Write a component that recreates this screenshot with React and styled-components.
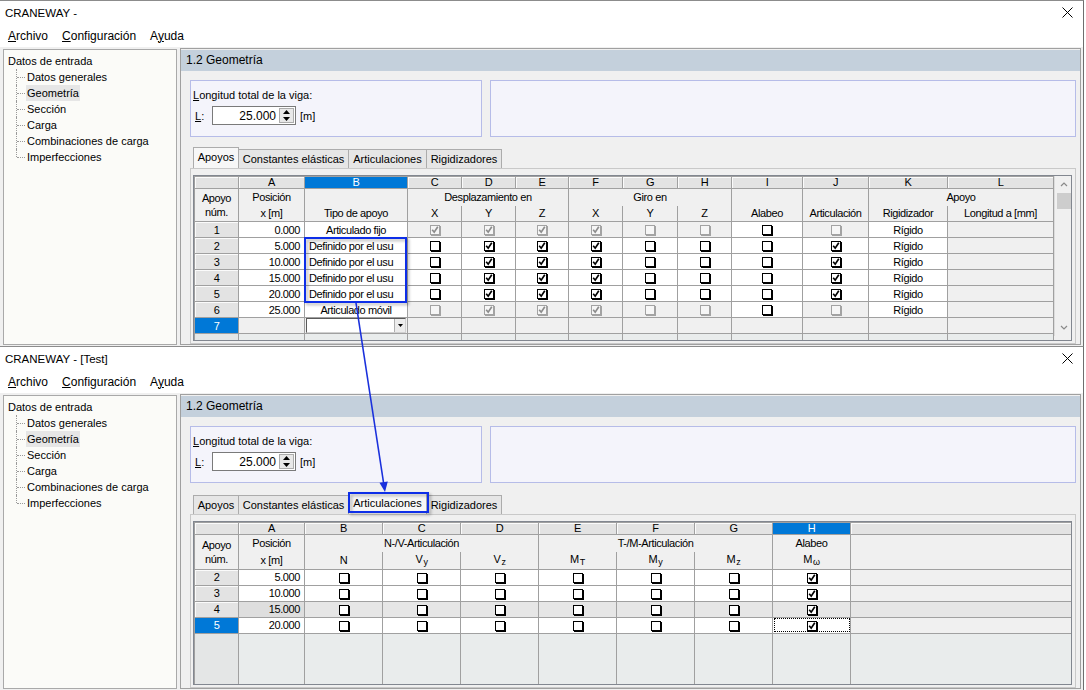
import React from "react";
import styled, { createGlobalStyle } from "styled-components";

const GlobalStyle = createGlobalStyle`
  html, body { margin: 0; padding: 0; background: #fff; }
  body { font-family: "Liberation Sans", Arial, sans-serif; color: #000; }
`;

const Page = styled.div`
  position: relative;
  width: 1086px;
  height: 690px;
  overflow: hidden;
  background: #fff;
`;

const Window = styled.section`
  width: 1084px;
  height: ${p => p.$h}px;
  box-sizing: border-box;
  border-top: 1px solid #8c8c8c;
  border-right: 1px solid #6e6e6e;
  display: flex;
  flex-direction: column;
  overflow: hidden;
  background: #f0f0f0;
`;

const TitleBar = styled.div`
  height: 23px;
  flex: none;
  background: #fff;
  display: flex;
  align-items: center;
  justify-content: space-between;
  padding: 0 10px 0 5px;
  font-size: 11.5px;
`;

const MenuBar = styled.div`
  height: 23px;
  flex: none;
  background: #fff;
  display: flex;
  align-items: center;
  gap: 14px;
  padding-left: 8px;
  font-size: 12px;
`;

const Body = styled.div`
  flex: 1;
  min-height: 0;
  display: flex;
  padding: 1px 2px 1px 3px;
`;

const Tree = styled.div`
  width: 174px;
  flex: none;
  box-sizing: border-box;
  margin-top: 1px;
  border: 1px solid #a9a9a9;
  background: #fbfbf8;
  padding: 3px 0 0 4px;
  font-size: 11px;
`;

const TreeRoot = styled.div`
  height: 16px;
  line-height: 16px;
`;

const TreeChild = styled.div`
  display: flex;
  align-items: center;
  height: 16px;
  margin-left: 8px;
`;

const Connector = styled.span`
  position: relative;
  width: 10px;
  height: 16px;
  flex: none;
  &::before {
    content: "";
    position: absolute;
    left: 0;
    top: 0;
    height: ${p => (p.$last ? "8px" : "16px")};
    border-left: 1px dotted #9a9a9a;
  }
  &::after {
    content: "";
    position: absolute;
    left: 1px;
    top: 8px;
    width: 8px;
    border-top: 1px dotted #9a9a9a;
  }
`;

const TreeLabel = styled.span`
  padding: 0 1px;
  line-height: 16px;
  background: ${p => (p.$sel ? "#e6e6e6" : "transparent")};
`;

const Main = styled.div`
  flex: 1;
  min-width: 0;
  margin-left: 3px;
  border: 1px solid #a0a0a0;
  padding-top: 1px;
  display: flex;
  flex-direction: column;
`;

const HeaderBar = styled.div`
  height: 21px;
  flex: none;
  background: #c4d0dc;
  padding-left: 5px;
  line-height: 21px;
  font-size: 12px;
`;

const Content = styled.div`
  flex: 1;
  min-height: 0;
  display: flex;
  flex-direction: column;
  padding: 9px 4px 0 9px;
`;

const GroupRow = styled.div`
  display: flex;
  gap: 8px;
  height: 57px;
  flex: none;
`;

const GroupBox = styled.div`
  box-sizing: border-box;
  width: ${p => (p.$w ? `${p.$w}px` : "auto")};
  flex: ${p => (p.$w ? "none" : 1)};
  border: 1px solid #b6bce8;
  background: #f4f4fb;
  padding: 7px 0 0 2px;
  font-size: 11px;
`;

const FieldLabel = styled.div`
  line-height: 15px;
`;

const InputRow = styled.div`
  display: flex;
  align-items: center;
  height: 19px;
  margin-top: 3px;
`;

const ShortLabel = styled.span`
  width: 19px;
  padding-left: 2px;
  box-sizing: border-box;
`;

const NumInput = styled.div`
  width: 84px;
  height: 19px;
  box-sizing: border-box;
  border: 1px solid #7a7a7a;
  background: #fff;
  display: flex;
  align-items: center;
`;

const NumValue = styled.span`
  flex: 1;
  text-align: right;
  padding-right: 3px;
  font-size: 12px;
`;

const Spin = styled.div`
  width: 15px;
  height: 15px;
  margin-right: 1px;
  border: 1px solid #acacac;
  background: #e8e8e8;
  box-sizing: border-box;
  display: flex;
  flex-direction: column;
  align-items: center;
  justify-content: space-around;
`;

const Unit = styled.span`
  margin-left: 4px;
`;

const TabStrip = styled.div`
  display: flex;
  align-items: flex-end;
  height: 21px;
  margin-top: 10px;
  padding-left: 3px;
  flex: none;
`;

const Tab = styled.div`
  width: ${p => p.$w}px;
  height: ${p => (p.$active ? 21 : 19)}px;
  box-sizing: border-box;
  border: 1px solid #acacac;
  border-bottom: none;
  margin-right: -1px;
  background: ${p => (p.$active ? "#f7f7f7" : "#e6e6e6")};
  font-size: 11px;
  text-align: center;
  line-height: ${p => (p.$active ? 19 : 18)}px;
  white-space: nowrap;
`;

const TabPanel = styled.div`
  flex: 1;
  min-height: 0;
  border: 1px solid #c9c9c9;
  padding: 6px 3px 2px 2px;
  display: flex;
  flex-direction: column;
`;

const Frame = styled.div`
  flex: 1;
  min-height: 0;
  border: 1px solid #828790;
  background: #f0f0f0;
  display: flex;
  align-items: flex-start;
  overflow: hidden;
`;

const Table = styled.table`
  border-collapse: collapse;
  table-layout: fixed;
  width: ${p => p.$w}px;
  font-family: "Liberation Sans", Arial, sans-serif;
  font-size: 11px;
  letter-spacing: -0.4px;
  color: #000;
  flex: none;
`;

const LetterRow = styled.tr`
  height: 12px;
`;

const Letter = styled.th`
  padding: 0;
  font-weight: normal;
  line-height: 11px;
  border: 1px solid #a0a0a0;
  background: ${p => (p.$sel ? "#0078d7" : "#e3e3e3")};
  color: ${p => (p.$sel ? "#fff" : "#000")};
  box-shadow: ${p => (p.$sel ? "none" : "inset 1px 1px 0 #fbfbfb")};
`;

const HeadRow = styled.tr`
  height: ${p => p.$h || 17}px;
`;

const Head = styled.th`
  padding: 0 2px;
  font-weight: normal;
  line-height: 14px;
  white-space: nowrap;
  overflow: hidden;
  background: #f0f0f0;
  border: 1px solid #a0a0a0;
  ${p => (p.$top ? "border-bottom: none;" : "")}
  ${p => (p.$bottom ? "border-top: none;" : "")}
`;

const DataRow = styled.tr`
  height: 16px;
`;

const RowHead = styled.td`
  padding: 0;
  text-align: center;
  line-height: 14px;
  border: 1px solid #a0a0a0;
  background: ${p => (p.$sel ? "#0078d7" : "#e3e3e3")};
  color: ${p => (p.$sel ? "#fff" : "#000")};
  box-shadow: ${p => (p.$sel ? "none" : "inset 1px 1px 0 #fbfbfb")};
`;

const Cell = styled.td`
  padding: ${p => (p.$flush ? "0" : "0 4px")};
  line-height: 14px;
  text-align: ${p => p.$align || "center"};
  white-space: nowrap;
  overflow: hidden;
  border: 1px solid #a0a0a0;
  background: ${p => p.$bg || "#fff"};
  ${p => (p.$focus ? "outline: 1px dotted #000; outline-offset: -2px;" : "")}
`;

const FillRow = styled.tr`
  height: ${p => p.$h}px;
`;

const Fill = styled.td`
  padding: 0;
  border: 1px solid #a0a0a0;
  border-bottom: none;
  background: ${p => (p.$head ? "#e4e6e6" : "#e9ecec")};
`;

const Box = styled.span`
  display: inline-flex;
  align-items: center;
  justify-content: center;
  vertical-align: middle;
  width: 10px;
  height: 10px;
  box-sizing: border-box;
  border: 1px solid ${p => (p.$dis ? "#a3a3a3" : "#000")};
  box-shadow: 1px 1px 0 ${p => (p.$dis ? "#a3a3a3" : "#000")};
  background: ${p => (p.$dis ? "#f6f6f6" : "#fff")};
  margin-top: -1px;
`;

const Combo = styled.div`
  height: 13px;
  margin: 0 1px;
  border: 1px solid #5a5a5a;
  border-right-color: #d0d0d0;
  border-bottom-color: #d0d0d0;
  background: #fff;
  display: flex;
  justify-content: flex-end;
`;

const ComboBtn = styled.span`
  width: 10px;
  background: #ececec;
  border-left: 1px solid #b0b0b0;
  display: flex;
  align-items: center;
  justify-content: center;
`;

const Scrollbar = styled.div`
  width: 18px;
  height: 160px;
  flex: none;
  background: #f0f0f0;
  border-left: 1px solid #dcdcdc;
  box-sizing: border-box;
  display: flex;
  flex-direction: column;
  align-items: center;
`;

const ScrollArrow = styled.div`
  height: 17px;
  display: flex;
  align-items: center;
  justify-content: center;
`;

const Thumb = styled.div`
  width: 14px;
  height: 16px;
  background: #cdcdcd;
`;

const Spacer = styled.div`
  flex: 1;
`;

const Sub = styled.span`
  font-size: 9px;
  vertical-align: -2px;
  margin-left: 1px;
`;

const Overlay = styled.svg`
  position: absolute;
  left: 0;
  top: 0;
  pointer-events: none;
`;

const Under = styled.span`
  text-decoration: underline;
`;

const CheckBox = ({ s }) => {
  const dis = s === "X" || s === "O";
  const on = s === "x" || s === "X";
  return (
    <Box $dis={dis}>
      {on && (
        <svg width="8" height="8" viewBox="0 0 8 8">
          <path d="M1.2 3.8 L3.2 6.2 L6.8 0.8" fill="none" stroke={dis ? "#8c8c8c" : "#000"} strokeWidth="1.7" />
        </svg>
      )}
    </Box>
  );
};

const CloseIcon = () => (
  <svg width="11" height="11" viewBox="0 0 11 11">
    <path d="M0.5 0.5 L10.5 10.5 M10.5 0.5 L0.5 10.5" stroke="#000" strokeWidth="1" />
  </svg>
);

const Chevron = ({ down }) => (
  <svg width="8" height="5" viewBox="0 0 8 5">
    <path d={down ? "M1 1 L4 4 L7 1" : "M1 4 L4 1 L7 4"} fill="none" stroke="#8a8a8a" strokeWidth="1.2" />
  </svg>
);

const treeItems = [
  "Datos generales",
  "Geometría",
  "Sección",
  "Carga",
  "Combinaciones de carga",
  "Imperfecciones",
];

const tabs = [
  ["Apoyos", 46],
  ["Constantes elásticas", 111],
  ["Articulaciones", 79],
  ["Rigidizadores", 76],
];

const AppWindow = ({ h, title, activeTab, children }) => (
  <Window $h={h}>
    <TitleBar>
      <span>{title}</span>
      <CloseIcon />
    </TitleBar>
    <MenuBar>
      <span><Under>A</Under>rchivo</span>
      <span><Under>C</Under>onfiguración</span>
      <span>A<Under>y</Under>uda</span>
    </MenuBar>
    <Body>
      <Tree>
        <TreeRoot>Datos de entrada</TreeRoot>
        {treeItems.map((t, i) => (
          <TreeChild key={t}>
            <Connector $last={i === treeItems.length - 1} />
            <TreeLabel $sel={t === "Geometría"}>{t}</TreeLabel>
          </TreeChild>
        ))}
      </Tree>
      <Main>
        <HeaderBar>1.2 Geometría</HeaderBar>
        <Content>
          <GroupRow>
            <GroupBox $w={292}>
              <FieldLabel><Under>L</Under>ongitud total de la viga:</FieldLabel>
              <InputRow>
                <ShortLabel><Under>L</Under>:</ShortLabel>
                <NumInput>
                  <NumValue>25.000</NumValue>
                  <Spin>
                    <svg width="7" height="4" viewBox="0 0 7 4"><path d="M0 4 L3.5 0 L7 4 Z" fill="#000" /></svg>
                    <svg width="7" height="4" viewBox="0 0 7 4"><path d="M0 0 L3.5 4 L7 0 Z" fill="#000" /></svg>
                  </Spin>
                </NumInput>
                <Unit>[m]</Unit>
              </InputRow>
            </GroupBox>
            <GroupBox />
          </GroupRow>
          <TabStrip>
            {tabs.map(([t, w]) => (
              <Tab key={t} $w={w} $active={t === activeTab}>{t}</Tab>
            ))}
          </TabStrip>
          <TabPanel>
            <Frame>{children}</Frame>
          </TabPanel>
        </Content>
      </Main>
    </Body>
  </Window>
);

/* ---- top table: Apoyos ---- */
const topCols = [44, 66, 103, 54, 54, 53, 54, 55, 54, 71, 66, 79, 106];
const topLetters = ["", "A", "B", "C", "D", "E", "F", "G", "H", "I", "J", "K", "L"];
const definido = { b: "Definido por el usu", left: true, c: "oxxxoo", i: "o", j: "x" };
const topRows = [
  { n: "1", a: "0.000", b: "Articulado fijo", c: "XXXXOO", i: "o", j: "O" },
  { n: "2", a: "5.000", ...definido },
  { n: "3", a: "10.000", ...definido },
  { n: "4", a: "15.000", ...definido },
  { n: "5", a: "20.000", ...definido },
  { n: "6", a: "25.000", b: "Articulado móvil", c: "OXXXOO", i: "o", j: "O" },
];

const stateBg = s => (s === "X" || s === "O" ? "#f0f0f0" : "#fff");

const ApoyosTable = () => (
  <>
    <Table $w={859}>
      <colgroup>
        {topCols.map((w, i) => <col key={i} style={{ width: w }} />)}
      </colgroup>
      <thead>
        <LetterRow>
          {topLetters.map((l, i) => <Letter key={i} $sel={l === "B"}>{l}</Letter>)}
        </LetterRow>
        <HeadRow>
          <Head rowSpan={2}>Apoyo<br />núm.</Head>
          <Head $top>Posición</Head>
          <Head $top />
          <Head $top colSpan={3}>Desplazamiento en</Head>
          <Head $top colSpan={3}>Giro en</Head>
          <Head $top />
          <Head $top />
          <Head $top colSpan={2}>Apoyo</Head>
        </HeadRow>
        <HeadRow $h={16}>
          {["x [m]", "Tipo de apoyo", "X", "Y", "Z", "X", "Y", "Z", "Alabeo", "Articulación", "Rigidizador", "Longitud a [mm]"].map((t, i) => (
            <Head key={i} $bottom>{t}</Head>
          ))}
        </HeadRow>
      </thead>
      <tbody>
        {topRows.map(r => (
          <DataRow key={r.n}>
            <RowHead>{r.n}</RowHead>
            <Cell $align="right">{r.a}</Cell>
            <Cell $align={r.left ? "left" : "center"}>{r.b}</Cell>
            {r.c.split("").map((s, i) => (
              <Cell key={i} $bg={stateBg(s)}><CheckBox s={s} /></Cell>
            ))}
            <Cell $bg={stateBg(r.i)}><CheckBox s={r.i} /></Cell>
            <Cell $bg={stateBg(r.j)}><CheckBox s={r.j} /></Cell>
            <Cell>Rígido</Cell>
            <Cell $bg="#f0f0f0" />
          </DataRow>
        ))}
        <DataRow>
          <RowHead $sel>7</RowHead>
          <Cell $bg="#f0f0f0" />
          <Cell $flush $bg="#f0f0f0">
            <Combo>
              <ComboBtn>
                <svg width="5" height="3" viewBox="0 0 5 3"><path d="M0 0 L5 0 L2.5 3 Z" fill="#000" /></svg>
              </ComboBtn>
            </Combo>
          </Cell>
          {Array.from({ length: 10 }).map((_, i) => <Cell key={i} $bg="#f0f0f0" />)}
        </DataRow>
        <FillRow $h={30}>
          {topCols.map((_, i) => <Fill key={i} $head={i === 0} />)}
        </FillRow>
      </tbody>
    </Table>
    <Scrollbar>
      <ScrollArrow><Chevron /></ScrollArrow>
      <Thumb />
      <Spacer />
      <ScrollArrow><Chevron down /></ScrollArrow>
    </Scrollbar>
  </>
);

/* ---- lower table: Articulaciones ---- */
const lowCols = [44, 66, 78, 78, 78, 78, 78, 78, 78, 221];
const lowLetters = ["", "A", "B", "C", "D", "E", "F", "G", "H", ""];
const lowRows = [
  { n: "2", a: "5.000" },
  { n: "3", a: "10.000" },
  { n: "4", a: "15.000", gray: true },
  { n: "5", a: "20.000", sel: true },
];

const ArticulacionesTable = () => (
  <Table $w={877}>
    <colgroup>
      {lowCols.map((w, i) => <col key={i} style={{ width: w }} />)}
    </colgroup>
    <thead>
      <LetterRow>
        {lowLetters.map((l, i) => <Letter key={i} $sel={l === "H"}>{l}</Letter>)}
      </LetterRow>
      <HeadRow>
        <Head rowSpan={2}>Apoyo<br />núm.</Head>
        <Head $top>Posición</Head>
        <Head $top colSpan={3}>N-/V-Articulación</Head>
        <Head $top colSpan={3}>T-/M-Articulación</Head>
        <Head $top>Alabeo</Head>
        <Head $top />
      </HeadRow>
      <HeadRow $h={16}>
        <Head $bottom>x [m]</Head>
        <Head $bottom>N</Head>
        <Head $bottom>V<Sub>y</Sub></Head>
        <Head $bottom>V<Sub>z</Sub></Head>
        <Head $bottom>M<Sub>T</Sub></Head>
        <Head $bottom>M<Sub>y</Sub></Head>
        <Head $bottom>M<Sub>z</Sub></Head>
        <Head $bottom>M<Sub>ω</Sub></Head>
        <Head $bottom />
      </HeadRow>
    </thead>
    <tbody>
      {lowRows.map(r => {
        const bg = r.gray ? "#e6e6e6" : "#fff";
        return (
          <DataRow key={r.n}>
            <RowHead $sel={r.sel}>{r.n}</RowHead>
            <Cell $align="right" $bg={r.gray ? "#dedede" : "#fff"}>{r.a}</Cell>
            {"oooooo".split("").map((s, i) => (
              <Cell key={i} $bg={bg}><CheckBox s={s} /></Cell>
            ))}
            <Cell $bg={bg} $focus={r.sel}><CheckBox s="x" /></Cell>
            <Cell $bg={r.gray ? "#e6e6e6" : "#f0f0f0"} />
          </DataRow>
        );
      })}
      <FillRow $h={52}>
        {lowCols.map((_, i) => <Fill key={i} $head={i === 0} />)}
      </FillRow>
    </tbody>
  </Table>
);

const Annotations = () => (
  <Overlay width="1086" height="690" viewBox="0 0 1086 690">
    <defs>
      <filter id="sh" x="-20%" y="-20%" width="140%" height="160%">
        <feDropShadow dx="2" dy="2" stdDeviation="1.5" floodColor="#000" floodOpacity="0.3" />
      </filter>
    </defs>
    <rect x="305" y="238" width="101" height="64" fill="none" stroke="#0a2ee8" strokeWidth="2" filter="url(#sh)" />
    <rect x="349" y="493" width="79" height="19" fill="none" stroke="#0a2ee8" strokeWidth="2" filter="url(#sh)" />
    <line x1="356" y1="303" x2="383.6" y2="483" stroke="#1a30dc" strokeWidth="1.6" />
    <polygon points="385,492 379.5,482.7 387.8,481.5" fill="#1a30dc" />
  </Overlay>
);

export default function App() {
  return (
    <>
      <GlobalStyle />
      <Page>
        <AppWindow h={346} title="CRANEWAY -" activeTab="Apoyos">
          <ApoyosTable />
        </AppWindow>
        <AppWindow h={344} title="CRANEWAY - [Test]" activeTab="Articulaciones">
          <ArticulacionesTable />
        </AppWindow>
        <Annotations />
      </Page>
    </>
  );
}
